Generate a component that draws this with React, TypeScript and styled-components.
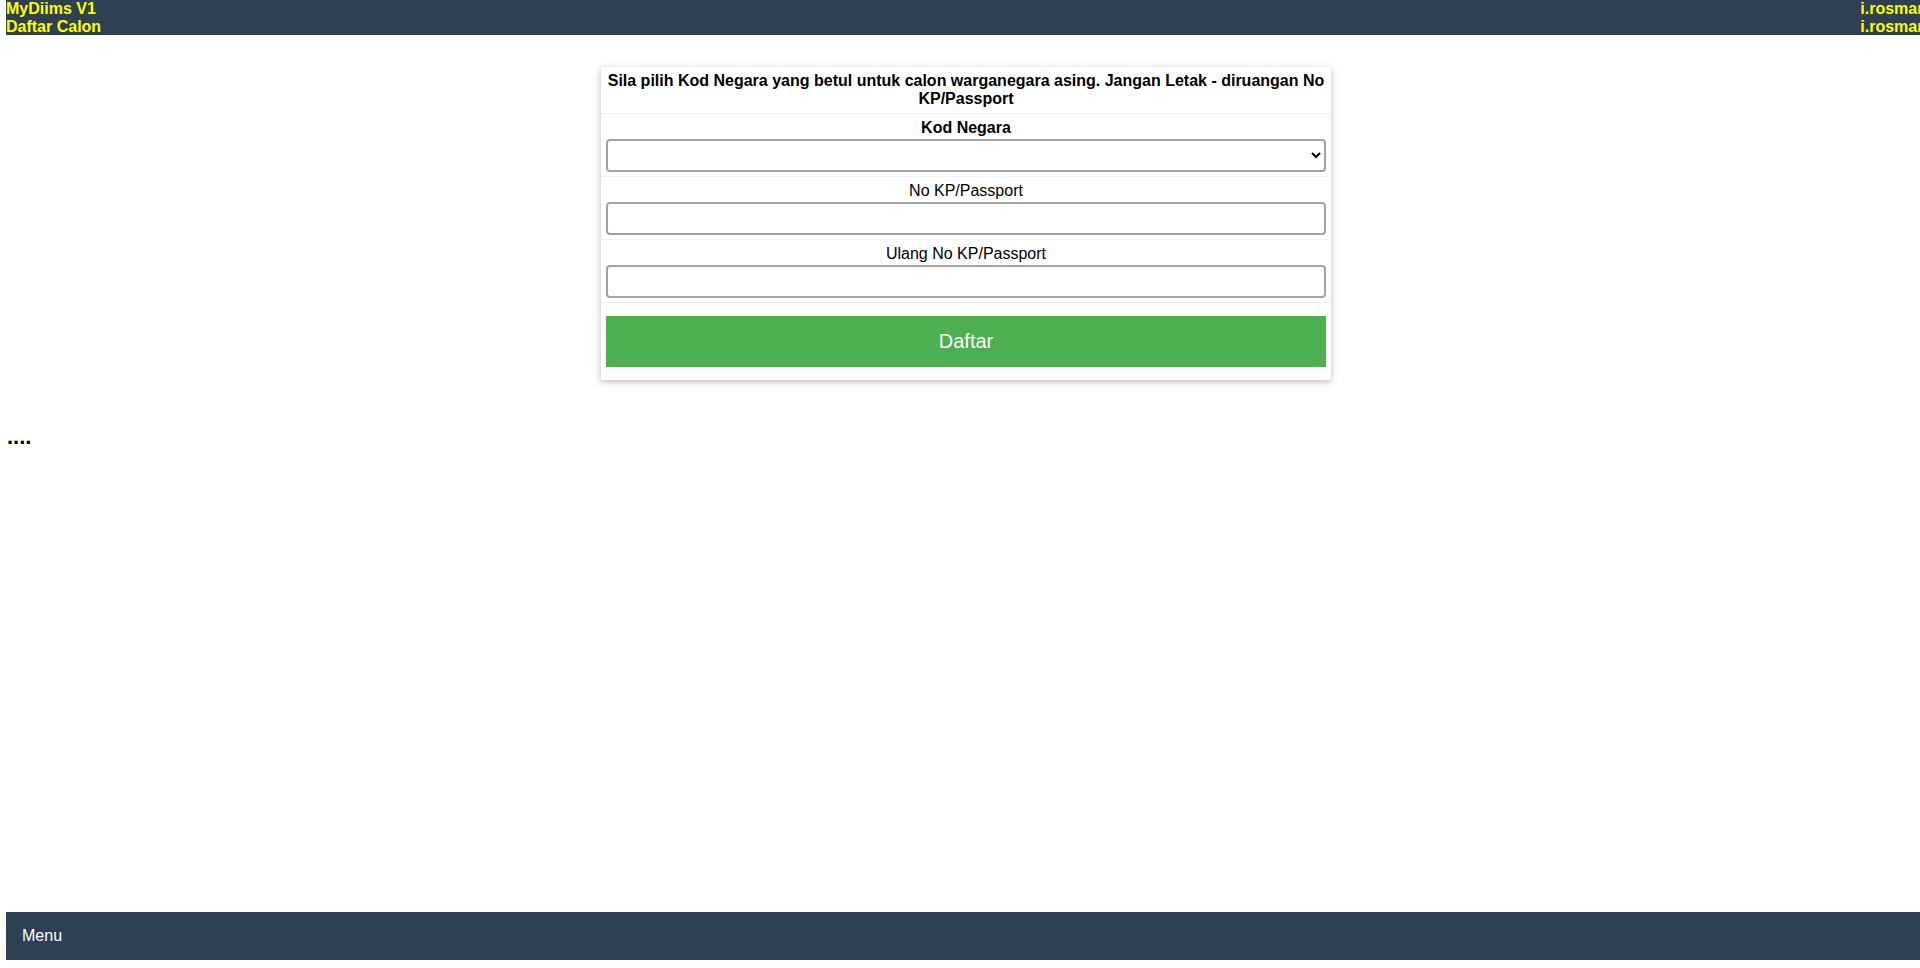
import React from "react";
import styled, {createGlobalStyle} from "styled-components";

const GlobalStyle = createGlobalStyle`
  html, body {
    margin: 0;
    padding: 0;
    overflow: hidden;
    background: #ffffff;
  }
  body {
    font-family: "Liberation Sans", Arial, sans-serif;
    font-size: 16px;
    color: #000000;
  }
`;

const Page = styled.div`
  display: flex;
  flex-direction: column;
  min-height: 100vh;
  box-sizing: border-box;
  padding: 0 0 8px 6px;
  overflow: hidden;
`;

const TopBar = styled.header`
  display: flex;
  justify-content: space-between;
  margin-right: -7px;
  background-color: #2e4053;
  color: #ffff00;
  font-weight: 700;
  font-size: 16px;
  line-height: 17.5px;
`;

const TopBarColumn = styled.div`
  display: flex;
  flex-direction: column;
  white-space: nowrap;
`;

const Main = styled.main`
  display: flex;
  flex-direction: column;
  padding-top: 32px;
`;

const Card = styled.div`
  width: 730px;
  margin: 0 auto;
  position: relative;
  left: 3px;
  background: #ffffff;
  box-shadow: 0 2px 5px 0 rgba(0, 0, 0, 0.16), 0 2px 10px 0 rgba(0, 0, 0, 0.12);
`;

const Row = styled.div<{ $pad?: string }>`
  display: flex;
  flex-direction: column;
  align-items: stretch;
  padding: ${p => p.$pad || "5px 5px 4px"};
  border-bottom: 1px solid #f1f1f1;
  text-align: center;

  &:last-child {
    border-bottom: none;
  }
`;

const Title = styled.div`
  font-weight: 700;
  font-size: 16px;
  line-height: 18px;
  margin: 0 -3px;
`;

const Label = styled.label<{ $bold?: boolean }>`
  display: block;
  font-size: 16px;
  line-height: 18px;
  font-weight: ${p => (p.$bold ? 700 : 400)};
  margin-bottom: 2px;
`;

const fieldBox = `
  box-sizing: border-box;
  width: 100%;
  height: 33px;
  border: 2px solid #a3a3a3;
  border-radius: 4px;
  background: #ffffff;
  font-family: "Liberation Sans", Arial, sans-serif;
  font-size: 16px;
  outline: none;
`;

const Select = styled.select`
  ${fieldBox}
  padding: 0 6px;
`;

const TextInput = styled.input`
  ${fieldBox}
  padding: 0 8px;
`;

const SubmitButton = styled.button`
  width: 100%;
  height: 51px;
  border: none;
  background-color: #4caf50;
  color: #ffffff;
  font-family: "Liberation Sans", Arial, sans-serif;
  font-size: 20px;
  cursor: pointer;
`;

const Dots = styled.div`
  margin-top: 44px;
  padding-left: 1px;
  font-weight: 700;
  font-size: 22px;
  line-height: 25px;
`;

const BottomBar = styled.footer`
  margin-top: auto;
  height: 48px;
  background-color: #2e4053;
  color: #ffffff;
  font-size: 16px;
  line-height: 48px;
  padding-left: 16px;
`;

export default function App() {
    return (
        <>
            <GlobalStyle/>
            <Page>
                <TopBar>
                    <TopBarColumn>
                        <span>MyDiims V1</span>
                        <span>Daftar Calon</span>
                    </TopBarColumn>
                    <TopBarColumn>
                        <span>i.rosman</span>
                        <span>i.rosman</span>
                    </TopBarColumn>
                </TopBar>
                <Main>
                    <Card>
                        <Row $pad="5px 5px 5px">
                            <Title>
                                Sila pilih Kod Negara yang betul untuk calon warganegara asing. Jangan Letak - diruangan No KP/Passport
                            </Title>
                        </Row>
                        <Row>
                            <Label $bold>Kod Negara</Label>
                            <Select defaultValue="">
                                <option value=""></option>
                            </Select>
                        </Row>
                        <Row>
                            <Label>No KP/Passport</Label>
                            <TextInput type="text"/>
                        </Row>
                        <Row>
                            <Label>Ulang No KP/Passport</Label>
                            <TextInput type="text"/>
                        </Row>
                        <Row $pad="13px 5px 13px">
                            <SubmitButton>Daftar</SubmitButton>
                        </Row>
                    </Card>
                    <Dots>....</Dots>
                </Main>
                <BottomBar>Menu</BottomBar>
            </Page>
        </>
    );
}
